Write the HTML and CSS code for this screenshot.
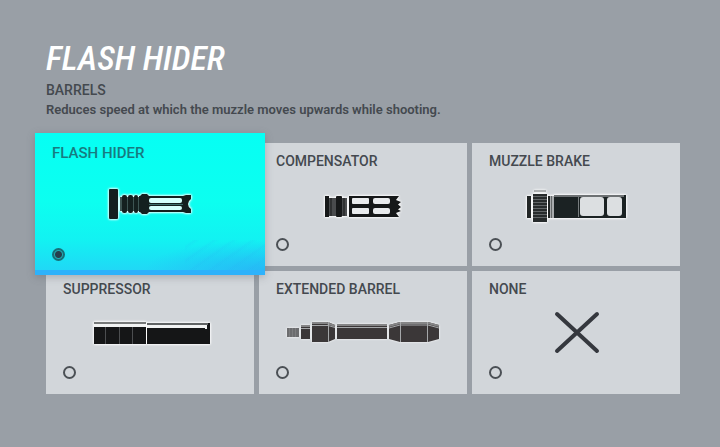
FILE: index.html
```html
<!DOCTYPE html>
<html lang="en">
<head>
<meta charset="utf-8">
<title>Barrels</title>
<link rel="stylesheet" href="styles.css">
</head>
<body>
<main class="screen">
  <header class="heading">
    <h1 class="title">FLASH HIDER</h1>
    <h2 class="category">BARRELS</h2>
    <p class="description">Reduces speed at which the muzzle moves upwards while shooting.</p>
  </header>
  <form class="options">
    <label class="card card-selected">
      <span class="name">FLASH HIDER</span>
      <svg class="icon icon-outlined" viewBox="0 0 160 50" aria-hidden="true">
        <g fill="#14201f">
          <rect x="39" y="9" width="9" height="30" rx="1"/>
          <rect x="50" y="17" width="24" height="14" fill="#3d5452"/>
          <rect x="52" y="15" width="5" height="18" rx="2"/>
          <rect x="58" y="15" width="5" height="18" rx="2"/>
          <rect x="64" y="15" width="4" height="18" rx="2"/>
          <path d="M69 16h1l2-2h5l2 2h1v16h-1l-2 2h-5l-2-2h-1z"/>
          <path d="M79 16h34l3-1h5v4q-3 2-3 5t3 5v4h-5l-3-1H79z"/>
        </g>
        <rect x="79" y="18" width="33" height="5" rx="2" fill="#d4fffb"/>
        <rect x="79" y="26" width="33" height="4" rx="2" fill="#d4fffb"/>
        <path d="M79 24.500h34" stroke="#3d6c69"/>
      </svg>
      <input class="radio" type="radio" name="barrel" checked>
    </label>
    <label class="card">
      <span class="name">COMPENSATOR</span>
      <svg class="icon icon-outlined" viewBox="0 0 160 50" aria-hidden="true">
        <g fill="#161819">
          <rect x="42" y="17" width="4" height="21"/>
          <rect x="46" y="19" width="18" height="18" fill="#494b4d"/>
          <path d="M48 19v18M61 19v18" stroke="#161819"/>
          <rect x="53" y="17" width="6" height="21" rx="1"/>
          <path d="M66 17h50l-3 4 5 2-3 2.500 3 2.500-3 2.500 3 1.500-5 2 3 4H66z"/>
        </g>
        <g fill="#e9ebed">
          <rect x="69" y="19" width="17" height="6" rx="1"/>
          <rect x="90" y="19" width="17" height="6" rx="2"/>
          <rect x="69" y="29" width="17" height="6" rx="1"/>
          <rect x="90" y="29" width="17" height="6" rx="2"/>
        </g>
      </svg>
      <input class="radio" type="radio" name="barrel">
    </label>
    <label class="card">
      <span class="name">MUZZLE BRAKE</span>
      <svg class="icon icon-outlined" viewBox="0 0 160 50" aria-hidden="true">
        <rect x="31" y="17" width="4" height="22" fill="#222626"/>
        <path d="M38 12h12" stroke="#6f7375"/>
        <rect x="37" y="15" width="14" height="28" fill="#272b2c"/>
        <path d="M37 17.500h14M37 20.500h14M37 23.500h14M37 26.500h14M37 29.500h14M37 32.500h14M37 35.500h14M37 38.500h14" stroke="#626668"/>
        <rect x="52" y="17" width="2" height="22" fill="#222626"/>
        <rect x="54" y="17" width="4" height="22" fill="#a8abad"/>
        <path d="M55.500 17v22" stroke="#646869"/>
        <rect x="58" y="16" width="72" height="23" fill="#1b2223"/>
        <path d="M58 17h70" stroke="#6d7173" stroke-width="2"/>
        <path d="M82.500 18v20" stroke="#777c7e"/>
        <rect x="84" y="18" width="24" height="19" rx="3" fill="#dcdfe1"/>
        <rect x="111" y="18" width="15" height="19" rx="3" fill="#dcdfe1"/>
      </svg>
      <input class="radio" type="radio" name="barrel">
    </label>
    <label class="card">
      <span class="name">SUPPRESSOR</span>
      <svg class="icon icon-outlined" viewBox="0 0 160 50" aria-hidden="true">
        <rect x="24" y="15" width="52" height="2" fill="#777979"/>
        <rect x="24" y="17" width="52" height="3" fill="#f2f3f3"/>
        <rect x="24" y="20" width="52" height="17" fill="#151617"/>
        <path d="M35.500 20v17M49.500 20v17M62.500 20v17" stroke="#4c4e50"/>
        <rect x="77" y="16" width="63" height="21" fill="#151617"/>
        <rect x="77" y="16" width="61" height="2" fill="#606364"/>
        <path d="M77 18h60v4h-2v-1H77z" fill="#f2f3f3"/>
      </svg>
      <input class="radio" type="radio" name="barrel">
    </label>
    <label class="card">
      <span class="name">EXTENDED BARREL</span>
      <svg class="icon icon-outlined icon-faint" viewBox="0 0 160 50" aria-hidden="true">
        <rect x="4" y="21" width="12" height="9" fill="#6c6d6f"/>
        <path d="M6.500 21v9M9.500 21v9M12.500 21v9" stroke="#7c7d7f"/>
        <g fill="#3b3738">
          <rect x="18" y="18" width="9" height="14"/>
          <path d="M29 15h16l7 3v14l-7 3H29z"/>
          <rect x="54" y="17" width="50" height="15"/>
          <path d="M106 18l11-3h28l11 3v14l-11 3h-28l-11-3z"/>
        </g>
        <path d="M18 19h9M29 16h15l8 3M54 18h50M106 19l11-3h28l11 3" fill="none" stroke="#858586" stroke-width="2"/>
        <path d="M18 21.500h9M29 18.500h16l7 2M54 20.500h50M106 21l11-3h28l11 3M45.500 15v20M117.500 15v20M144.500 15v20" fill="none" stroke="#a5a7a9"/>
      </svg>
      <input class="radio" type="radio" name="barrel">
    </label>
    <label class="card">
      <span class="name">NONE</span>
      <svg class="icon" viewBox="0 0 160 50" aria-hidden="true">
        <path d="M61 7l40 37M101 7L61 44" fill="none" stroke="#35383e" stroke-width="4" stroke-linecap="round"/>
      </svg>
      <input class="radio" type="radio" name="barrel">
    </label>
  </form>
</main>
</body>
</html>
```
FILE: styles.css
```css
* {
  box-sizing: border-box;
}

body {
  margin: 0;
  min-height: 100vh;
  background: #999fa6;
  color: #44494f;
  font-family: Roboto, "Liberation Sans", sans-serif;
}

.screen {
  padding: 36px 40px 48px 46px;
}

.heading {
  margin-bottom: 25px;
}

.title,
.category,
.description {
  margin: 0;
}

.title {
  color: #fff;
  font-family: "Roboto Condensed", "Liberation Sans Narrow", Roboto, sans-serif;
  font-size: 34px;
  font-style: italic;
  font-weight: 500;
  line-height: 44px;
}

.category {
  margin-top: 2px;
  font-size: 14px;
  font-weight: 500;
  line-height: 16px;
}

.description {
  margin-top: 4px;
  font-size: 13px;
  font-weight: 600;
  line-height: 16px;
}

.options {
  display: grid;
  grid-template-columns: repeat(3, 1fr);
  gap: 5px;
}

.card {
  display: grid;
  grid-template-rows: auto 1fr auto;
  min-height: 123px;
  padding: 10px 17px 15px;
  background: #d2d6da;
}

.card-selected {
  position: relative;
  margin: -10px -11px -9px;
  padding: 12px 17px 9px;
  border-bottom: 5px solid #2eb2fb;
  background:
    repeating-linear-gradient(145deg, #2ba8f000 0 4px, #2ba8f018 6px, #2ba8f000 9px 11px) right bottom / 80px 30px no-repeat,
    radial-gradient(ellipse 120px 30px at 100% 100%, #2aa5f599, #2aa5f500),
    linear-gradient(#06fff4 0, #0cfff0 50%, #12f2f2 78%, #20d8f6 100%);
  box-shadow: 0 2px 8px #50586055;
  color: #177b80;
}

.name {
  font-size: 14px;
  font-weight: 500;
  line-height: 16px;
}

.card-selected .name {
  font-size: 15px;
}

.icon {
  align-self: center;
  justify-self: center;
  width: 160px;
  height: 50px;
}

.icon-outlined {
  filter: drop-shadow(0 0 1px #fff) drop-shadow(0 0 1px #fff);
}

.icon-faint {
  filter: drop-shadow(0 0 1px #fff);
}

.radio {
  appearance: none;
  width: 13px;
  height: 13px;
  margin: 0;
  border: 2px solid #4b5055;
  border-radius: 50%;
}

.radio:checked {
  border-color: #176f78;
  background: radial-gradient(circle, #263f4d 0 3px, #21aeb5 4px);
}
```
